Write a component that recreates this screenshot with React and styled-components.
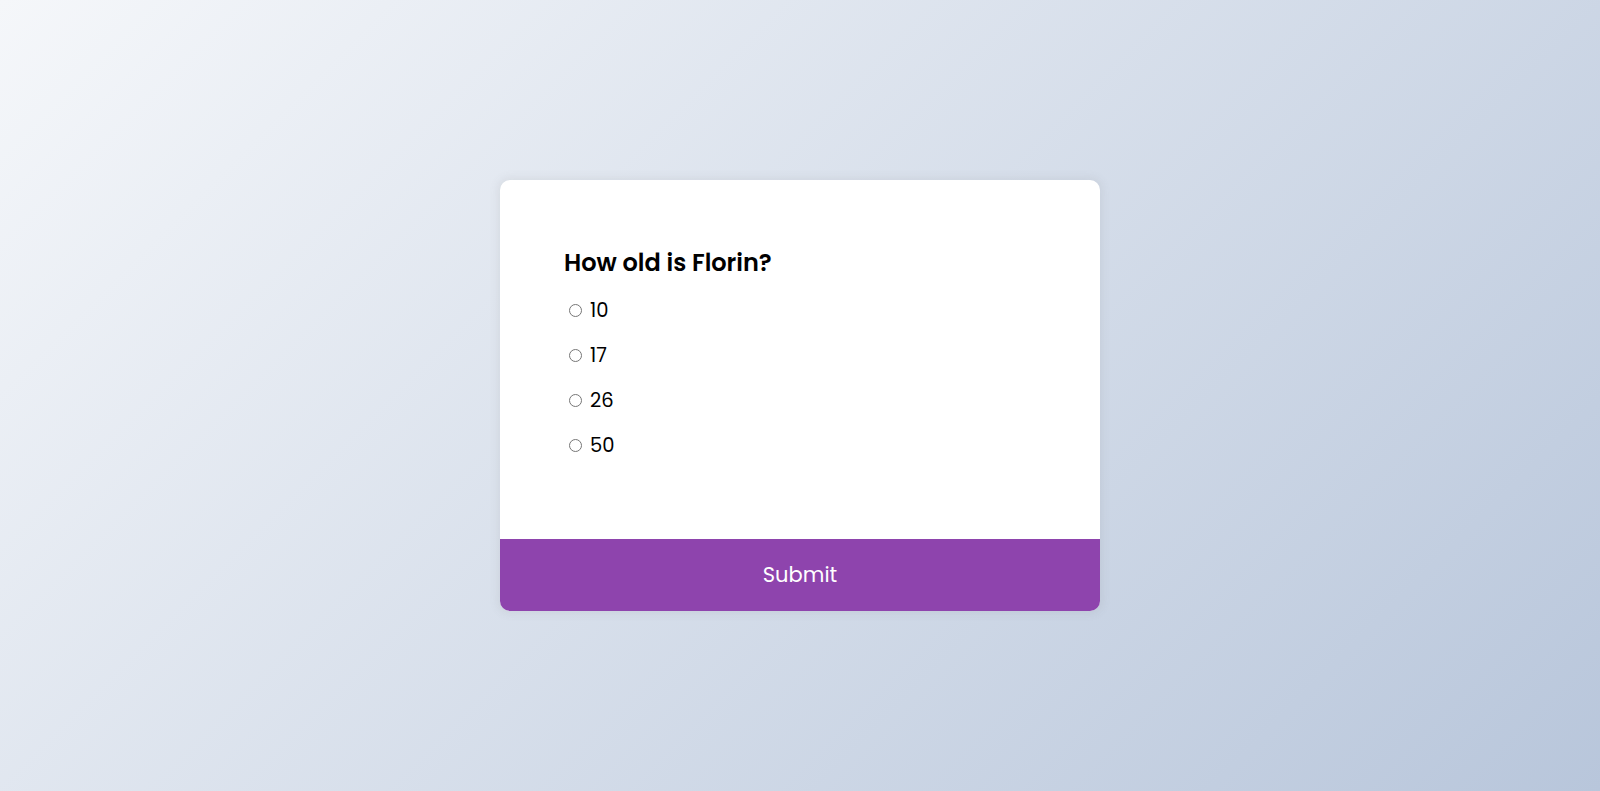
import React from "react";
import styled, { createGlobalStyle } from "styled-components";

const GlobalStyle = createGlobalStyle`
  * {
    box-sizing: border-box;
  }
  body {
    margin: 0;
    height: 100vh;
    overflow: hidden;
    background-color: #b8c6db;
    background-image: linear-gradient(315deg, #b8c6db 0%, #f5f7fa 100%);
    font-family: "Poppins", "Inter", "Noto Sans", sans-serif;
  }
`;

const Page = styled.div`
  height: 100vh;
  display: flex;
  align-items: center;
  justify-content: center;
`;

const QuizCard = styled.div`
  width: 600px;
  background-color: #fff;
  border-radius: 10px;
  box-shadow: 0 0 10px 2px rgba(100, 100, 100, 0.1);
  overflow: hidden;
`;

const QuizHeader = styled.div`
  padding: 66px 64px 79px;
`;

const Question = styled.h2`
  margin: 0;
  font-size: 24px;
  font-weight: 600;
  line-height: 34px;
  color: #000;
`;

const Answers = styled.ul`
  list-style: none;
  padding: 0;
  margin: 16px 0 0;
`;

const Answer = styled.li`
  display: flex;
  align-items: center;
  font-size: 19.5px;
  line-height: 29px;
  margin: 16px 0 0;
  color: #000;

  input {
    width: 13px;
    height: 13px;
    margin: 0 8px 0 5px;
  }

  label {
    cursor: pointer;
  }
`;

const SubmitButton = styled.button`
  display: block;
  width: 100%;
  border: none;
  background-color: #8e44ad;
  color: #fff;
  font-family: inherit;
  font-size: 21px;
  line-height: 30px;
  padding: 21px;
  cursor: pointer;
`;

const answers = ["10", "17", "26", "50"];

export default function App() {
  return (
    <>
      <GlobalStyle />
      <Page>
        <QuizCard>
          <QuizHeader>
            <Question>How old is Florin?</Question>
            <Answers>
              {answers.map((a, i) => (
                <Answer key={a}>
                  <input type="radio" name="answer" id={"a" + i} />
                  <label htmlFor={"a" + i}>{a}</label>
                </Answer>
              ))}
            </Answers>
          </QuizHeader>
          <SubmitButton>Submit</SubmitButton>
        </QuizCard>
      </Page>
    </>
  );
}
